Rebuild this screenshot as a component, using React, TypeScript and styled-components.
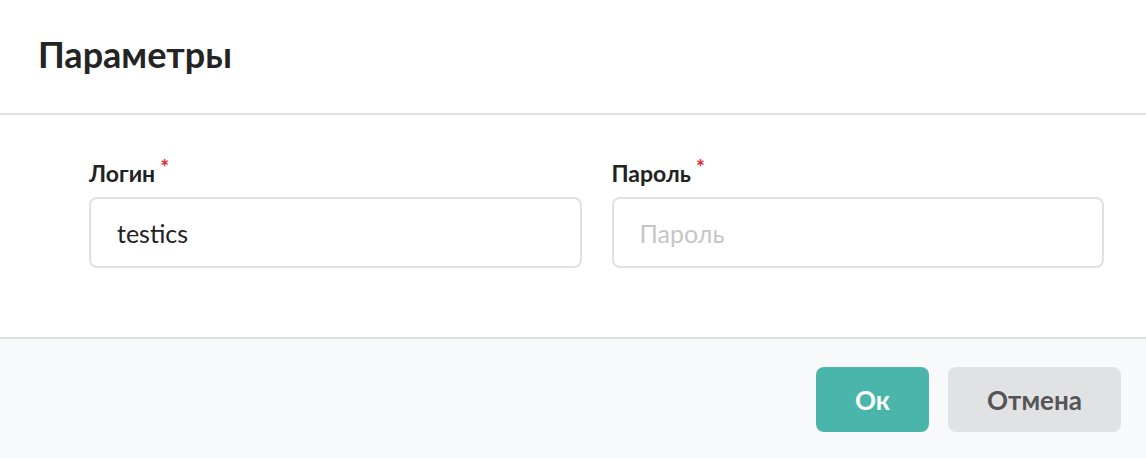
import React from "react";
import styled, { createGlobalStyle } from "styled-components";

const Global = createGlobalStyle`
  html, body { margin: 0; padding: 0; background: #ffffff; }
  body { font-family: Lato, "Open Sans", sans-serif; }
  * { box-sizing: border-box; }
`;

const Dialog = styled.div`
  width: 1146px;
  height: 458px;
  display: flex;
  flex-direction: column;
  background: #ffffff;
`;

const Header = styled.div`
  padding: 32px 38px 37px;
  border-bottom: 2px solid #e3e3e3;
`;

const Title = styled.h1`
  margin: 0;
  font-family: Lato, sans-serif;
  font-weight: 700;
  font-size: 36px;
  line-height: 44px;
  color: #242424;
`;

const Body = styled.div`
  flex: 1;
  padding: 45px 42px 0 89px;
  display: grid;
  grid-template-columns: 1fr 1fr;
  column-gap: 30px;
  align-content: start;
`;

const Field = styled.div`
  display: flex;
  flex-direction: column;
  gap: 10px;
`;

const Label = styled.label`
  font-weight: 700;
  font-size: 23px;
  line-height: 27px;
  color: #222222;
`;

const Required = styled.span`
  color: #e0282e;
  font-size: 21px;
  position: relative;
  top: -7px;
  margin-left: 5px;
`;

const Input = styled.input`
  height: 71px;
  width: 100%;
  border: 2px solid #e1e1e1;
  border-radius: 8px;
  padding: 0 26px;
  font-family: Lato, sans-serif;
  font-size: 25px;
  color: #222222;
  outline: none;
  background: #ffffff;
  &::placeholder { color: #c6c6c6; }
`;

const Footer = styled.div`
  height: 121px;
  border-top: 2px solid #dedede;
  background: #f8f9fb;
  display: flex;
  justify-content: flex-end;
  align-items: flex-start;
  gap: 19px;
  padding: 28px 25px 0;
`;

const Button = styled.button<{ $primary?: boolean; $w: number }>`
  width: ${(p) => p.$w}px;
  height: 65px;
  border: none;
  border-radius: 8px;
  font-family: Lato, sans-serif;
  font-weight: 700;
  font-size: 26px;
  background: ${(p) => (p.$primary ? "#4ab6ab" : "#e1e2e4")};
  color: ${(p) => (p.$primary ? "#ffffff" : "#555555")};
  cursor: pointer;
`;

export default function App() {
  return (
    <Dialog>
      <Global />
      <Header>
        <Title>Параметры</Title>
      </Header>
      <Body>
        <Field>
          <Label>
            Логин<Required>*</Required>
          </Label>
          <Input defaultValue="testics" />
        </Field>
        <Field>
          <Label>
            Пароль<Required>*</Required>
          </Label>
          <Input placeholder="Пароль" type="text" />
        </Field>
      </Body>
      <Footer>
        <Button $primary $w={113}>Ок</Button>
        <Button $w={173}>Отмена</Button>
      </Footer>
    </Dialog>
  );
}
